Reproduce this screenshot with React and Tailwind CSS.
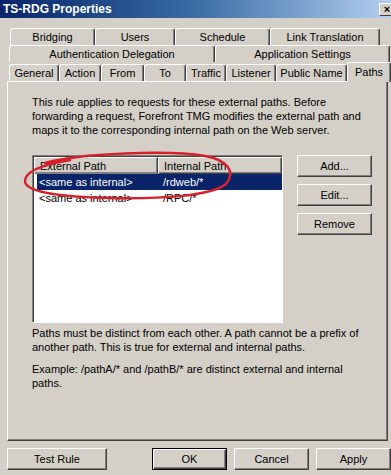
const raised =
  "border border-t-white border-l-white border-r-[#404040] border-b-[#404040] shadow-[inset_-1px_-1px_0_#808080]";

function Tab({ label, w, className = "" }) {
  return (
    <div
      className={`h-[17px] flex items-center justify-center border-t border-l border-t-white border-l-white border-r border-r-[#404040] rounded-t-[3px] shadow-[inset_-1px_0_0_#808080] ${className}`}
      style={{ width: w }}
    >
      {label}
    </div>
  );
}

function Button({ label, w, isDefault }) {
  return (
    <div
      className={
        isDefault
          ? "h-[22px] flex items-center justify-center border border-black shadow-[inset_1px_1px_0_#fff,inset_-1px_-1px_0_#404040,inset_-2px_-2px_0_#808080]"
          : `h-[22px] flex items-center justify-center ${raised}`
      }
      style={{ width: w }}
    >
      {label}
    </div>
  );
}

const rows = [
  { ext: "<same as internal>", int: "/rdweb/*", selected: true },
  { ext: "<same as internal>", int: "/RPC/*" },
];

export default function App() {
  return (
    <div className="relative w-[391px] h-[475px] overflow-hidden bg-[#d4d0c8] text-[11px] leading-[14px] text-black font-['Liberation_Sans',Arial,sans-serif]">
      {/* title bar */}
      <div className="h-[18px] flex items-center justify-between pl-[3px] bg-gradient-to-r from-[#0a246a] via-[#3a6ea5] to-[#b4cff0]">
        <span className="text-white font-bold text-[12px]">TS-RDG Properties</span>
        <div className="w-[16px] h-[13px] mr-[-4px] flex items-center justify-center bg-[#d4d0c8] border border-t-white border-l-white border-r-[#404040] border-b-[#404040] font-bold text-[11px] leading-none">
          ×
        </div>
      </div>

      {/* tab rows */}
      <div className="mt-[10px]">
        <div className="flex ml-[10px]">
          <Tab label="Bridging" w={85} />
          <Tab label="Users" w={80} />
          <Tab label="Schedule" w={95} />
          <Tab label="Link Translation" w={110} />
        </div>
        <div className="flex ml-[9px]">
          <Tab label="Authentication Delegation" w={206} />
          <Tab label="Application Settings" w={175} />
        </div>
        <div className="flex items-end ml-[9px] h-[19px]">
          <Tab label="General" w={50} />
          <Tab label="Action" w={42} />
          <Tab label="From" w={43} />
          <Tab label="To" w={42} />
          <Tab label="Traffic" w={40} />
          <Tab label="Listener" w={50} />
          <Tab label="Public Name" w={71} />
          <div className="relative z-10 h-[20px] w-[44px] -mb-[1px] flex items-start justify-center pt-[2px] bg-[#d4d0c8] border-t border-l border-r border-t-white border-l-white border-r-[#404040] rounded-t-[3px] shadow-[inset_-1px_0_0_#808080]">
            Paths
          </div>
        </div>
      </div>

      {/* panel */}
      <div className="ml-[7px] w-[381px] h-[360px] border border-t-white border-l-white border-r-[#404040] border-b-[#404040] shadow-[inset_-1px_-1px_0_#808080] pl-[24px] pt-[13px]">
        <p className="w-[330px]">
          This rule applies to requests for these external paths. Before forwarding a request, Forefront TMG modifies
          the external path and maps it to the corresponding internal path on the Web server.
        </p>

        <div className="flex mt-[18px]">
          <div className="w-[251px] h-[168px] bg-white border border-t-[#808080] border-l-[#808080] border-r-white border-b-white shadow-[inset_1px_1px_0_#404040] pl-[1px] pt-[1px]">
            <div className="flex h-[17px] bg-[#d4d0c8]">
              <div className={`w-[124px] h-[17px] pl-[5px] flex items-center ${raised} border-b-[#808080]`}>External Path</div>
              <div className={`w-[124px] h-[17px] pl-[5px] flex items-center ${raised}`}>Internal Path</div>
            </div>
            {rows.map((r) => (
              <div key={r.int} className="flex h-[16px] items-center ml-[3px]">
                <div className={`flex h-full items-center w-[245px] ${r.selected ? "bg-[#0a246a] text-white" : ""}`}>
                  <span className="w-[126px] pl-[2px]">{r.ext}</span>
                  <span>{r.int}</span>
                </div>
              </div>
            ))}
          </div>

          <div className="flex flex-col gap-[7px] ml-[14px]">
            <Button label="Add..." w={75} />
            <Button label="Edit..." w={75} />
            <Button label="Remove" w={75} />
          </div>
        </div>

        <p className="w-[340px] mt-[3px]">
          Paths must be distinct from each other. A path cannot be a prefix of another path. This is true for external
          and internal paths.
        </p>
        <p className="w-[340px] mt-[8px]">
          Example: /pathA/* and /pathB/* are distinct external and internal paths.
        </p>
      </div>

      {/* bottom buttons */}
      <div className="flex items-center mt-[7px] ml-[7px]">
        <Button label="Test Rule" w={104} />
        <div className="ml-[45px] flex gap-[7px]">
          <Button label="OK" w={75} isDefault />
          <Button label="Cancel" w={75} />
          <Button label="Apply" w={75} />
        </div>
      </div>

      {/* red hand-drawn ellipse */}
      <svg className="absolute inset-0 pointer-events-none" width="391" height="475" viewBox="0 0 391 475">
        <path
          d="M 45 163 C 80 153, 170 150, 205 156 C 228 160, 236 172, 226 184 C 212 196, 160 199, 110 198 C 60 197, 25 192, 25 181 C 25 172, 40 165, 70 160"
          fill="none"
          stroke="#d8202a"
          strokeWidth="2.5"
          strokeLinecap="round"
        />
      </svg>
    </div>
  );
}
